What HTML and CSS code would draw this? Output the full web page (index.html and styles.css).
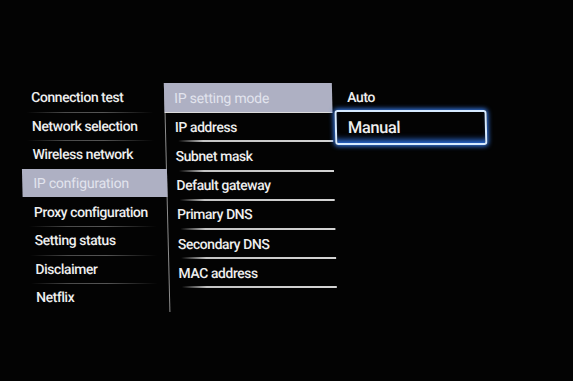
FILE: index.html
```html
<!doctype html>
<html>
  <head>
    <meta charset="utf-8">
    <title>Network settings</title>
    <link rel="stylesheet" href="styles.css">
  </head>
  <body>
    <div class="screen">
      <div class="menu">
        <ul class="col col-main">
          <li>Connection test</li>
          <li>Network selection</li>
          <li>Wireless network</li>
          <li class="selected">IP configuration</li>
          <li>Proxy configuration</li>
          <li>Setting status</li>
          <li>Disclaimer</li>
          <li>Netflix</li>
        </ul>
        <ul class="col col-sub">
          <li class="selected">IP setting mode</li>
          <li>IP address</li>
          <li>Subnet mask</li>
          <li>Default gateway</li>
          <li>Primary DNS</li>
          <li>Secondary DNS</li>
          <li>MAC address</li>
        </ul>
        <ul class="col col-opt">
          <li>Auto</li>
          <li class="focus">Manual</li>
        </ul>
      </div>
    </div>
  </body>
</html>
```

FILE: styles.css
```css
html, body {
  margin: 0;
  padding: 0;
  background: #030303;
}

* {
  font-family: Roboto, 'Liberation Sans', sans-serif;
}

.screen {
  width: 573px;
  height: 381px;
  overflow: hidden;
}

/* the photo was taken slightly from the side, so rows drift right going down */
.menu {
  display: flex;
  align-items: flex-start;
  padding: 83px 0 0 20px;
  transform: skewX(1.4deg);
  transform-origin: 0 90px;
}

.col {
  list-style: none;
  margin: 0;
  padding: 0;
}

.col li {
  display: flex;
  align-items: center;
  position: relative;
  color: #eeeeee;
  font-size: 14px;
  font-weight: 500;
  letter-spacing: -0.45px;
}

/* left column */
.col-main {
  width: 145px;
}
.col-main li {
  height: 28.6px;
  padding-left: 11px;
}
.col-main li::after {
  content: '';
  position: absolute;
  left: 6px;
  right: 12px;
  bottom: -1px;
  height: 1px;
  background: linear-gradient(90deg, transparent, #4a4a4a 30%, #555 60%, transparent);
}
.col-main li:last-child::after,
.col-main li.selected::after {
  display: none;
}

.selected {
  background: #aeb0c3;
}
.col li.selected {
  color: #e2e4ee;
  font-weight: 400;
  letter-spacing: -0.2px;
}

/* middle column */
.col-sub {
  width: 167px;
  margin-left: -1px;
  padding-bottom: 25px;
  border-left: 1px solid #8c8c8c;
}
.col-sub li {
  height: 29.2px;
  padding-left: 9px;
}
.col-sub li.selected {
  margin-left: -1px;
  padding-left: 10px;
}
.col-sub li::after {
  content: '';
  position: absolute;
  left: 12px;
  right: 0;
  bottom: -1px;
  height: 2px;
  background: linear-gradient(90deg, transparent, #c4c4c4 25px, #d4d4d4);
}
.col-sub li.selected::after {
  left: 0;
  height: 1px;
  background: #dcdcdc;
}

/* options column */
.col-opt {
  width: 152px;
  margin-left: 2px;
}
.col-opt li {
  height: 28px;
  padding-left: 13px;
}
.col-opt li.focus {
  height: 31px;
  margin-top: -1px;
  padding-left: 11px;
  font-size: 16.5px;
  border: 2px solid #d6eaff;
  border-radius: 3px;
  box-shadow: 0 0 5px 1px #3b86ff, inset 0 -7px 6px -4px #2f74e8;
}
```
